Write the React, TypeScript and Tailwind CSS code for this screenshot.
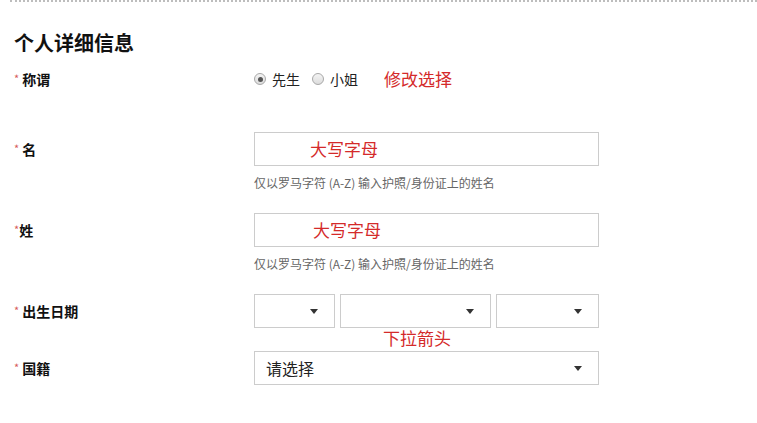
import React from "react";

const cjk = "font-['Noto_Sans_CJK_SC',sans-serif]";

const Star = ({ gap = true }: { gap?: boolean }) => (
  <span className={`text-[11px] text-[#d65a5a] leading-none relative -top-[1px] ${gap ? "mr-[3px]" : "mr-0"}`}>*</span>
);

const Label = ({ text, gap = true }: { text: string; gap?: boolean }) => (
  <div className="w-[254px] pl-[14px] flex items-center">
    <Star gap={gap} />
    <span className="text-[14px] font-bold text-[#111] leading-[20px]">{text}</span>
  </div>
);

const Arrow = () => (
  <span className="w-0 h-0 border-l-[4px] border-r-[4px] border-t-[5px] border-l-transparent border-r-transparent border-t-[#333]" />
);

const Radio = ({ checked }: { checked?: boolean }) => (
  <span className="w-[12px] h-[12px] rounded-full border border-[#a8a8a8] bg-gradient-to-b from-[#f4f4f4] to-[#dcdcdc] flex items-center justify-center">
    {checked && <span className="w-[5px] h-[5px] rounded-full bg-[#555]" />}
  </span>
);

const Hint = () => (
  <div className="mt-[10px] text-[12px] leading-[14px] text-[#666]">
    仅以罗马字符 (A-Z) 输入护照/身份证上的姓名
  </div>
);

export default function App() {
  return (
    <div className={`w-[757px] h-[423px] bg-white overflow-hidden ${cjk}`}>
      <div className="ml-[10px] border-t-2 border-dotted border-[#bdbdbd]" />

      <div className="mt-[29px] pl-[14px] h-[24px] flex items-center text-[20px] font-bold text-[#111]">
        个人详细信息
      </div>

      {/* 称谓 */}
      <div className="mt-[12px] h-[24px] flex items-center">
        <Label text="称谓" />
        <div className="flex items-center">
          <Radio checked />
          <span className="ml-[6px] text-[14px] text-[#222]">先生</span>
          <span className="ml-[12px]">
            <Radio />
          </span>
          <span className="ml-[6px] text-[14px] text-[#222]">小姐</span>
          <span className="ml-[26px] text-[17px] text-[#d42a2a]">修改选择</span>
        </div>
      </div>

      {/* 名 */}
      <div className="mt-[41px] flex items-start">
        <div className="h-[34px] flex items-center">
          <Label text="名" />
        </div>
        <div className="w-[345px]">
          <div className="h-[34px] border border-[#cccccc] flex items-center pl-[55px] text-[17px] text-[#d42a2a]">
            大写字母
          </div>
          <Hint />
        </div>
      </div>

      {/* 姓 */}
      <div className="mt-[23px] flex items-start">
        <div className="h-[34px] flex items-center">
          <Label text="姓" gap={false} />
        </div>
        <div className="w-[345px]">
          <div className="h-[34px] border border-[#cccccc] flex items-center pl-[58px] text-[17px] text-[#d42a2a]">
            大写字母
          </div>
          <Hint />
        </div>
      </div>

      {/* 出生日期 */}
      <div className="mt-[23px] flex items-start">
        <div className="h-[34px] flex items-center">
          <Label text="出生日期" />
        </div>
        <div className="w-[345px]">
          <div className="flex gap-[5px]">
            <div className="w-[81px] h-[34px] border border-[#cccccc] flex items-center justify-end pr-[16px]">
              <Arrow />
            </div>
            <div className="w-[151px] h-[34px] border border-[#cccccc] flex items-center justify-end pr-[16px]">
              <Arrow />
            </div>
            <div className="w-[103px] h-[34px] border border-[#cccccc] flex items-center justify-end pr-[16px]">
              <Arrow />
            </div>
          </div>
          <div className="pl-[129px] h-[20px] leading-[20px] text-[17px] text-[#d42a2a]">下拉箭头</div>
        </div>
      </div>

      {/* 国籍 */}
      <div className="mt-[3px] flex items-start">
        <div className="h-[34px] flex items-center">
          <Label text="国籍" />
        </div>
        <div className="w-[345px] h-[34px] border border-[#cccccc] flex items-center justify-between pl-[11px] pr-[16px]">
          <span className="text-[16px] text-[#222]">请选择</span>
          <Arrow />
        </div>
      </div>
    </div>
  );
}
